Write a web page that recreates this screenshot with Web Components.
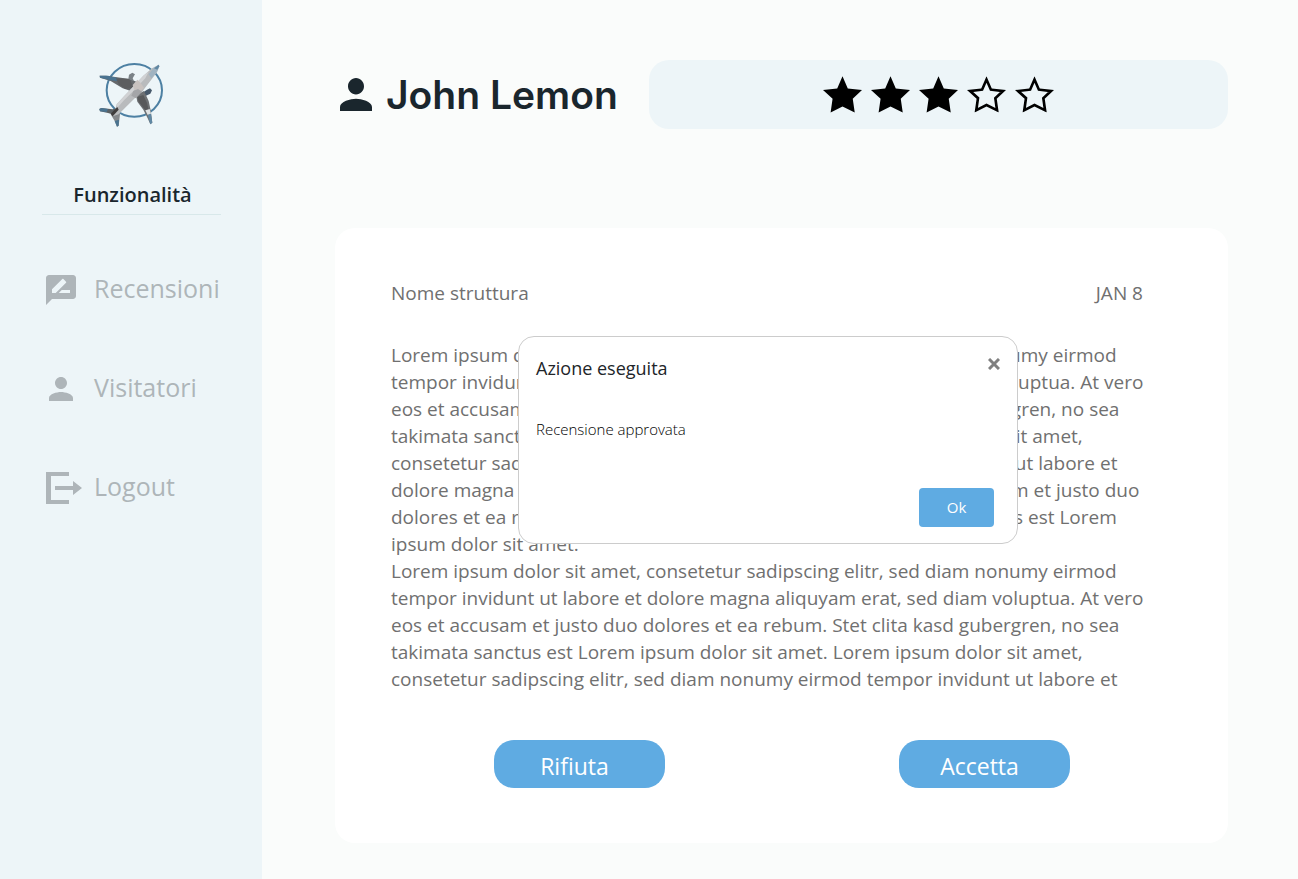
<!DOCTYPE html>
<html lang="it">
<head>
<meta charset="utf-8">
<meta name="viewport" content="width=device-width, initial-scale=1">
<title>Recensioni</title>
<style>
  body { margin: 0; font-family: "Open Sans", "Noto Sans", sans-serif; color: #1a262d; background: #fafcfb; }
</style>
</head>
<body>
<review-page></review-page>

<script>
const define = (name, html, setup) => {
  const template = document.createElement('template');
  template.innerHTML = html;
  customElements.define(name, class extends HTMLElement {
    constructor() {
      super();
      this.attachShadow({ mode: 'open' }).append(template.content.cloneNode(true));
    }
    connectedCallback() { if (setup) setup(this, this.shadowRoot); }
  });
};

define('brand-logo', `
<style>
  :host { display: block; width: 65px; height: 65px; }
  svg { display: block; width: 100%; height: 100%; }
</style>
<svg viewBox="57 38 195 195" role="img" aria-label="Logo">
  <ellipse cx="163" cy="120" rx="83" ry="79" fill="none" stroke="#4d80a3" stroke-width="6"/>
  <path d="M59 76L78 76L150 86L178 98L152 122L128 114L92 92L60 82Z" fill="#66696c"/>
  <path d="M59 76L84 76L116 84L110 92L92 90L60 82Z" fill="#4a7390"/>
  <path d="M108 84L150 86L160 112L136 116L116 102Z" fill="#5c5d5f"/>
  <path d="M145 86L147 73L157 67L165 72L158 84L162 92Z" fill="#7b8287"/>
  <path d="M192 124L201 118L210 114L216 120L211 130L198 136L188 136Z" fill="#46586a"/>
  <path d="M168 134L192 122L206 152L212 180L217 217L211 222L203 204L190 178L172 154Z" fill="#6d7073"/>
  <path d="M172 140L190 134L201 158L206 180L196 180L176 154Z" fill="#58595b"/>
  <path d="M196 180L209 176L213 190L203 194Z" fill="#dfe2e4"/>
  <path d="M203 194L213 190L217 217L211 222Z" fill="#5f87a3"/>
  <path d="M58 176L64 173L98 177L118 171L122 178L104 194L84 188L60 183Z" fill="#5b6064"/>
  <path d="M58 176L64 173L84 176L80 185L60 183Z" fill="#4a7390"/>
  <path d="M92 192L114 178L120 192L116 226L111 229L104 212Z" fill="#85888b"/>
  <path d="M104 212L117 208L116 226L111 229Z" fill="#4a7390"/>
  <path d="M106 178L110 162L132 138L162 106L190 76L216 54L236 43L238 48L231 66L208 96L188 122L162 146L134 174L116 192L98 198Z" fill="#b9bbbd"/>
  <path d="M110 162L162 106L190 76L206 64L196 84L160 122L132 150L112 172Z" fill="#d1d2d4"/>
  <path d="M158 104L172 88L182 98L192 112L178 128L162 116Z" fill="#c9c2bf"/>
  <path d="M160 122L174 116L186 124L168 144L154 136Z" fill="#a4a5a8"/>
  <path d="M206 72L220 54L236 43L238 48L231 64L214 84Z" fill="#a0b3c1"/>
  <path d="M222 54L236 43L238 48L232 58Z" fill="#5f87a3"/>
  <path d="M92 190L112 170L116 178L98 198Z" fill="#403d3d"/>
</svg>`);

define('side-link', `
<style>
  :host { display: block; }
  a { display: flex; align-items: center; gap: 12px; box-sizing: border-box; height: 40px; padding-bottom: 2px; color: #aeb5b9; font-size: 25px; line-height: 32px; text-decoration: none; }
  .icon { flex: none; display: flex; width: 36px; padding-top: 4px; }
</style>
<a href="#"><span class="icon"><slot name="icon"></slot></span><slot></slot></a>`);

define('side-bar', `
<style>
  :host { display: flex; flex-direction: column; flex: none; box-sizing: border-box; width: 262px; padding: 63px 41px 40px 42px; background: #edf5f8; }
  brand-logo { margin-left: 57px; }
  h2 { margin: 53px 0 0; padding: 0 0 5px 2px; border-bottom: 1px solid #d8e8ea; text-align: center; font-size: 20px; line-height: 28px; font-weight: 600; }
  nav { display: flex; flex-direction: column; gap: 59px; margin: 54px 0 0 4px; }
  svg { display: block; fill: #aeb5b9; }
  .visitor { margin-left: 3px; }
</style>
<brand-logo></brand-logo>
<h2>Funzionalità</h2>
<nav>
  <side-link>
    <svg slot="icon" width="30" height="30" viewBox="2 2 20 20"><path d="M20 2H4c-1.100 0-2 .9-2 2v18l4-4h14c1.100 0 2-.9 2-2V4c0-1.100-.9-2-2-2zM6 14v-2.470l6.880-6.880c.2-.2.510-.2.710 0l1.770 1.770c.2.2.2.510 0 .71L8.470 14H6zm12 0h-7.500l2-2H18v2z"/></svg>
    Recensioni
  </side-link>
  <side-link>
    <svg slot="icon" class="visitor" width="24" height="24" viewBox="4 4 16 16"><path d="M12 12c2.210 0 4-1.790 4-4s-1.790-4-4-4-4 1.790-4 4 1.790 4 4 4zm0 2c-2.670 0-8 1.340-8 4v2h16v-2c0-2.660-5.330-4-8-4z"/></svg>
    Visitatori
  </side-link>
  <side-link>
    <svg slot="icon" width="36" height="32" viewBox="0 0 36 32"><path d="M0 0H23V4H5V28H23V32H0ZM9 14H27V9L36 16L27 23V18H9Z"/></svg>
    Logout
  </side-link>
</nav>`);

define('user-title', `
<style>
  :host { display: flex; align-items: center; gap: 14px; padding-left: 5px; }
  svg { display: block; flex: none; fill: #1a262d; }
  h1 { margin: 0; font-family: Inter, sans-serif; font-size: 39px; line-height: 56px; font-weight: 600; white-space: nowrap; }
</style>
<svg width="32" height="33" viewBox="4 4 16 16" preserveAspectRatio="none" aria-hidden="true"><path d="M12 12c2.210 0 4-1.790 4-4s-1.790-4-4-4-4 1.790-4 4 1.790 4 4 4zm0 2c-2.670 0-8 1.340-8 4v2h16v-2c0-2.660-5.330-4-8-4z"/></svg>
<h1><slot></slot></h1>`);

define('star-rating', `
<style>
  :host { display: flex; align-items: center; justify-content: center; gap: 9px; box-sizing: border-box; height: 69px; padding-bottom: 1px; border-radius: 20px; background: #edf5f8; }
  svg { display: block; width: 39px; height: 37px; }
</style>`, (host, root) => {
  const value = Number(host.getAttribute('value'));
  const points = '59,0 75,37 118,42 90,68 96,110 59,92 23,110 29,68 0,42 43,37';
  let stars = '';
  for (let i = 0; i < 5; i++) {
    stars += i < value
      ? `<svg viewBox="0 0 118 111" aria-hidden="true"><polygon points="${points}"/></svg>`
      : `<svg viewBox="0 0 118 111" aria-hidden="true"><clipPath id="c${i}"><polygon points="${points}"/></clipPath><polygon points="${points}" clip-path="url(#c${i})" fill="none" stroke="#000" stroke-width="16"/></svg>`;
  }
  host.setAttribute('role', 'img');
  host.setAttribute('aria-label', value + ' stelle su 5');
  root.querySelector('style').insertAdjacentHTML('afterend', stars);
});

define('pill-button', `
<style>
  :host { display: block; }
  button { display: block; width: 171px; height: 48px; margin: 0; padding: 4px 10px 0 0; border: 0; border-radius: 20px; background: #5fabe2; color: #fff; font: inherit; font-size: 23px; line-height: 32px; cursor: pointer; }
</style>
<button type="button"><slot></slot></button>`);

define('review-card', `
<style>
  :host { display: block; box-sizing: border-box; padding: 52px 85px 55px 56px; border-radius: 20px; background: #fff; color: #707070; font-size: 19px; line-height: 27px; }
  header { display: flex; justify-content: space-between; }
  .text { margin-top: 35px; white-space: nowrap; }
  footer { display: flex; justify-content: space-between; margin: 47px 73px 0 103px; }
</style>
<header><slot name="place"></slot><slot name="date"></slot></header>
<div class="text"><slot></slot></div>
<footer><pill-button>Rifiuta</pill-button><pill-button>Accetta</pill-button></footer>`);

define('message-dialog', `
<style>
  :host { display: block; }
  section { display: flex; flex-direction: column; box-sizing: border-box; width: 500px; padding: 16px 17px; border: 1px solid #ccc; border-radius: 16px; background: #fff; color: #212529; }
  header { display: flex; justify-content: space-between; align-items: flex-start; }
  h2 { margin: 0; font-size: 18px; line-height: 30px; font-weight: 400; }
  .close { display: block; margin: 5px 0 0; padding: 0; border: 0; background: none; cursor: pointer; }
  svg { display: block; }
  p { margin: 34px 0 0; font-size: 15px; line-height: 24px; font-weight: 300; color: #000; }
  .ok { align-self: flex-end; width: 75px; height: 39px; margin: 47px 6px 0 0; padding: 0; border: 0; border-radius: 4px; background: #5fabe2; color: #fff; font: inherit; font-size: 15px; line-height: 24px; cursor: pointer; }
</style>
<section role="dialog" aria-labelledby="title">
  <header>
    <h2 id="title"><slot name="title"></slot></h2>
    <button class="close" type="button" aria-label="Chiudi"><svg width="12" height="12" viewBox="0 0 12 12"><path d="M1 1L11 11M11 1L1 11" stroke="#808080" stroke-width="3"/></svg></button>
  </header>
  <p><slot></slot></p>
  <button class="ok" type="button">Ok</button>
</section>`);

define('review-page', `
<style>
  :host { display: flex; min-height: 100vh; }
  main { position: relative; flex: 1; min-width: 0; box-sizing: border-box; padding: 60px 70px 36px 73px; }
  .top { display: flex; align-items: center; margin-bottom: 99px; }
  user-title { flex: none; width: 309px; }
  star-rating { flex: 1; }
  .overlay { position: absolute; inset: 0; display: flex; align-items: center; justify-content: center; padding-right: 24px; }
</style>
<side-bar></side-bar>
<main>
  <div class="top">
    <user-title>John Lemon</user-title>
    <star-rating value="3"></star-rating>
  </div>
  <review-card>
    <span slot="place">Nome struttura</span>
    <span slot="date">JAN 8</span>
    Lorem ipsum dolor sit amet, consetetur sadipscing elitr, sed diam nonumy eirmod<br>
    tempor invidunt ut labore et dolore magna aliquyam erat, sed diam voluptua. At vero<br>
    eos et accusam et justo duo dolores et ea rebum. Stet clita kasd gubergren, no sea<br>
    takimata sanctus est Lorem ipsum dolor sit amet. Lorem ipsum dolor sit amet,<br>
    consetetur sadipscing elitr, sed diam nonumy eirmod tempor invidunt ut labore et<br>
    dolore magna aliquyam erat, sed diam voluptua. At vero eos et accusam et justo duo<br>
    dolores et ea rebum. Stet clita kasd gubergren, no sea takimata sanctus est Lorem<br>
    ipsum dolor sit amet.<br>
    Lorem ipsum dolor sit amet, consetetur sadipscing elitr, sed diam nonumy eirmod<br>
    tempor invidunt ut labore et dolore magna aliquyam erat, sed diam voluptua. At vero<br>
    eos et accusam et justo duo dolores et ea rebum. Stet clita kasd gubergren, no sea<br>
    takimata sanctus est Lorem ipsum dolor sit amet. Lorem ipsum dolor sit amet,<br>
    consetetur sadipscing elitr, sed diam nonumy eirmod tempor invidunt ut labore et
  </review-card>
  <div class="overlay">
    <message-dialog><span slot="title">Azione eseguita</span>Recensione approvata</message-dialog>
  </div>
</main>`);
</script>
</body>
</html>
